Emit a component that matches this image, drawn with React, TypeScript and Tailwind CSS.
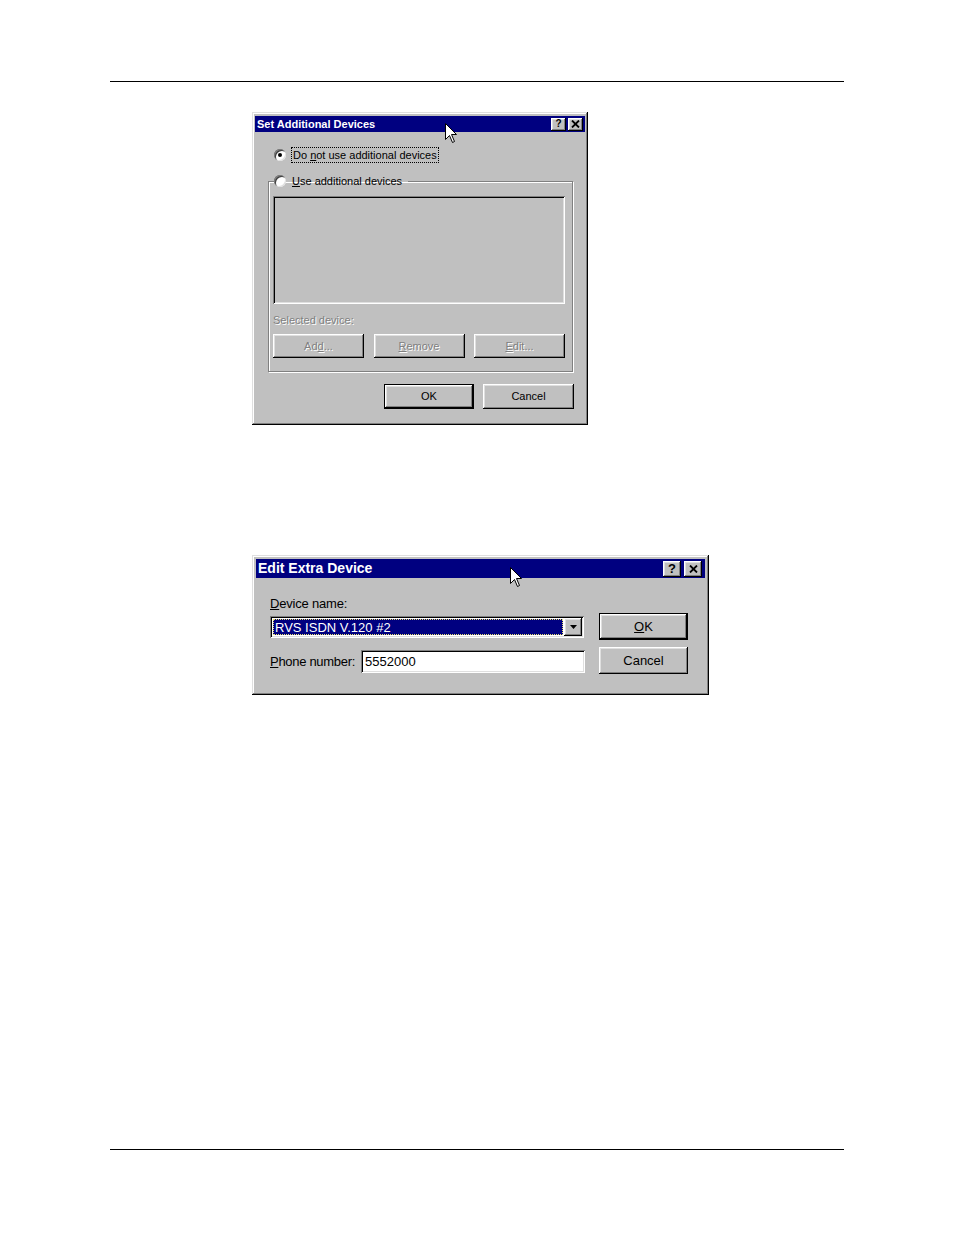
import React from "react";

// win95 bevels
const raised =
  "shadow-[inset_-1px_-1px_#000,inset_1px_1px_#fff,inset_-2px_-2px_#808080,inset_2px_2px_#dfdfdf]";
const windowFrame =
  "shadow-[inset_-1px_-1px_#000,inset_1px_1px_#dfdfdf,inset_-2px_-2px_#808080,inset_2px_2px_#fff]";
const sunken =
  "shadow-[inset_1px_1px_#808080,inset_-1px_-1px_#fff,inset_2px_2px_#000,inset_-2px_-2px_#dfdfdf]";
const defaultBtn =
  "shadow-[inset_0_0_0_1px_#000,inset_-2px_-2px_#000,inset_2px_2px_#fff,inset_-3px_-3px_#808080,inset_3px_3px_#dfdfdf]";

function Cursor({ className }: { className: string }) {
  return (
    <svg
      className={"absolute " + className}
      width="13"
      height="21"
      viewBox="0 0 13 21"
    >
      <path
        d="M0.5 0.5 L0.5 16.5 L4.5 12.5 L7.5 19.5 L9.5 18.5 L6.5 11.5 L11.5 11.5 Z"
        fill="#fff"
        stroke="#000"
        strokeWidth="1"
      />
    </svg>
  );
}

function TitleButtons({ size }: { size: "sm" | "lg" }) {
  const box = size === "sm" ? "w-[15px] h-[13px]" : "w-[18px] h-[16px]";
  const gap = size === "sm" ? "gap-[2px]" : "gap-[3px]";
  return (
    <div className={"flex items-center " + gap}>
      <div
        className={`${box} ${raised} bg-[#c0c0c0] flex items-center justify-center text-black font-bold leading-none ${
          size === "sm" ? "text-[10px]" : "text-[13px]"
        }`}
      >
        ?
      </div>
      <div className={`${box} ${raised} bg-[#c0c0c0] flex items-center justify-center`}>
        <svg width="9" height="8" viewBox="0 0 9 8">
          <path d="M1 0.5 L8 7.5 M8 0.5 L1 7.5" stroke="#000" strokeWidth="1.8" />
        </svg>
      </div>
    </div>
  );
}

function Radio({ checked }: { checked?: boolean }) {
  return (
    <span className="relative inline-block w-[12px] h-[12px] rounded-full bg-white shadow-[inset_1px_1px_#808080,inset_-1px_-1px_#dfdfdf,inset_2px_2px_#404040] shrink-0">
      {checked && (
        <span className="absolute left-[4px] top-[4px] w-[4px] h-[4px] rounded-full bg-black" />
      )}
    </span>
  );
}

function DisabledButton({ children }: { children: React.ReactNode }) {
  return (
    <div
      className={`w-[91px] h-[24px] ${raised} bg-[#c0c0c0] flex items-center justify-center text-[#808080] [text-shadow:1px_1px_0_#fff]`}
    >
      {children}
    </div>
  );
}

function SetAdditionalDevices() {
  return (
    <div
      className={`relative ml-[252px] mt-[30px] w-[336px] h-[313px] bg-[#c0c0c0] ${windowFrame} p-[3px] pt-[4px] text-[11px] text-black flex flex-col`}
      style={{ fontFamily: '"Liberation Sans", Arial, sans-serif' }}
    >
      <div className="h-[16px] bg-[#000080] flex items-center justify-between pl-[2px] pr-[2px]">
        <span className="text-white font-bold text-[11px]">Set Additional Devices</span>
        <TitleButtons size="sm" />
      </div>

      <div className="flex flex-col pl-[13px] pr-[12px]">
        <div className="flex items-center gap-[5px] mt-[15px] pl-[6px]">
          <Radio checked />
          <span className="border border-dotted border-black px-[1px] leading-[14px]">
            Do <span className="underline">n</span>ot use additional devices
          </span>
        </div>

        <fieldset className="mt-[11px] h-[198px] border border-[#808080] shadow-[1px_1px_0_#fff,inset_1px_1px_0_#fff] px-[4px] pb-[13px] flex flex-col">
          <legend className="ml-[1px] pr-[6px] flex items-center gap-[6px] leading-[14px]">
            <Radio />
            <span>
              <span className="underline">U</span>se additional devices
            </span>
          </legend>
          <div className={`mt-[8px] h-[108px] mr-[3px] ${sunken} bg-[#c0c0c0]`} />
          <div className="mt-[9px] text-[#808080] [text-shadow:1px_1px_0_#fff] leading-[14px]">
            Selected device:
          </div>
          <div className="mt-[7px] flex justify-between mr-[3px]">
            <DisabledButton>
              Ad<span className="underline">d</span>...
            </DisabledButton>
            <DisabledButton>
              <span className="underline">R</span>emove
            </DisabledButton>
            <DisabledButton>
              <span className="underline">E</span>dit...
            </DisabledButton>
          </div>
        </fieldset>

        <div className="mt-[12px] flex justify-end gap-[9px] mr-[-1px]">
          <div className={`w-[90px] h-[25px] ${defaultBtn} bg-[#c0c0c0] flex items-center justify-center`}>
            OK
          </div>
          <div className={`w-[91px] h-[25px] ${raised} bg-[#c0c0c0] flex items-center justify-center`}>
            Cancel
          </div>
        </div>
      </div>

      <Cursor className="left-[193px] top-[11px]" />
    </div>
  );
}

function EditExtraDevice() {
  return (
    <div
      className={`relative ml-[252px] mt-[130px] w-[457px] h-[140px] bg-[#c0c0c0] ${windowFrame} p-[4px] text-[13px] text-black flex flex-col`}
      style={{ fontFamily: '"Liberation Sans", Arial, sans-serif' }}
    >
      <div className="h-[19px] bg-[#000080] flex items-center justify-between pl-[2px] pr-[3px]">
        <span className="text-white font-bold text-[14px]">Edit Extra Device</span>
        <TitleButtons size="lg" />
      </div>

      <div className="flex pl-[14px] pr-[17px] mt-[16px] justify-between">
        <div className="flex flex-col w-[315px]">
          <div className="leading-[15px] mt-[2px] tracking-[-0.2px]">
            <span className="underline">D</span>evice name:
          </div>
          <div className={`mt-[5px] h-[22px] w-[314px] ${sunken} bg-white p-[2px] flex`}>
            <div className="flex-1 m-[1px] bg-[#000080] border border-dotted border-[#e8e070] text-white flex items-center pl-[1px] leading-none">
              RVS ISDN V.120 #2
            </div>
            <div className={`w-[18px] ${raised} bg-[#c0c0c0] flex items-center justify-center`}>
              <svg width="7" height="4" viewBox="0 0 7 4">
                <path d="M0 0 H7 L3.5 4 Z" fill="#000" />
              </svg>
            </div>
          </div>
          <div className="mt-[12px] flex items-center">
            <span className="w-[91px] leading-[15px] tracking-[-0.3px]">
              <span className="underline">P</span>hone number:
            </span>
            <div className={`h-[23px] w-[224px] ${sunken} bg-white flex items-center pl-[4px]`}>
              5552000
            </div>
          </div>
        </div>

        <div className="flex flex-col gap-[7px] w-[89px] mt-[19px]">
          <div className={`h-[27px] ${defaultBtn} bg-[#c0c0c0] flex items-center justify-center`}>
            <span>
              <span className="underline">O</span>K
            </span>
          </div>
          <div className={`h-[27px] ${raised} bg-[#c0c0c0] flex items-center justify-center`}>
            Cancel
          </div>
        </div>
      </div>

      <Cursor className="left-[258px] top-[12px]" />
    </div>
  );
}

export default function App() {
  return (
    <div className="w-[954px] h-[1235px] bg-white flex flex-col">
      <div className="mt-[81px] ml-[110px] w-[734px] h-[1px] bg-black" />
      <SetAdditionalDevices />
      <EditExtraDevice />
      <div className="mt-[454px] ml-[110px] w-[734px] h-[1px] bg-black" />
    </div>
  );
}
